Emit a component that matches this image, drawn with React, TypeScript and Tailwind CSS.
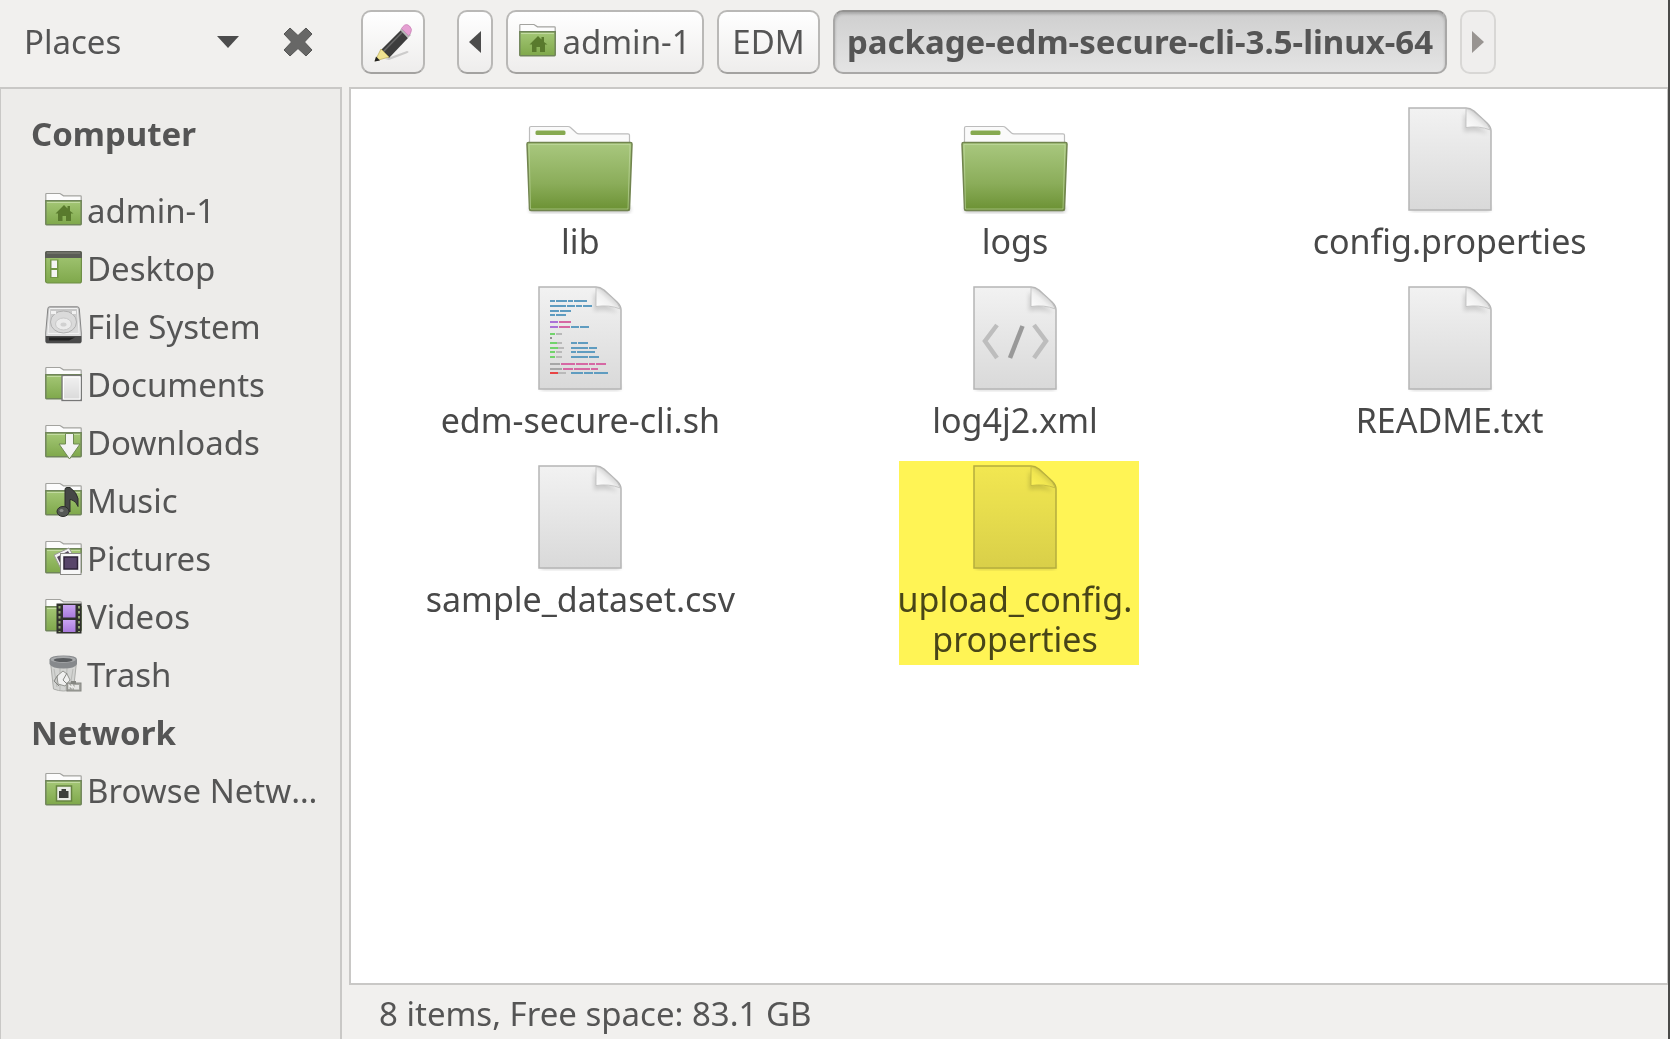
import type { ReactNode } from 'react';

const places = [
  { label: 'admin-1', icon: <HomeFolder /> },
  { label: 'Desktop', icon: <DesktopIcon /> },
  { label: 'File System', icon: <DriveIcon /> },
  { label: 'Documents', icon: <DocumentsFolder /> },
  { label: 'Downloads', icon: <DownloadsFolder /> },
  { label: 'Music', icon: <MusicFolder /> },
  { label: 'Pictures', icon: <PicturesFolder /> },
  { label: 'Videos', icon: <VideosFolder /> },
  { label: 'Trash', icon: <TrashIcon /> },
];

const files = [
  { lines: ['lib'], icon: <BigFolder /> },
  { lines: ['logs'], icon: <BigFolder /> },
  { lines: ['config.properties'], icon: <Page /> },
  { lines: ['edm-secure-cli.sh'], icon: <ScriptPage /> },
  { lines: ['log4j2.xml'], icon: <XmlPage /> },
  { lines: ['README.txt'], icon: <Page /> },
  { lines: ['sample_dataset.csv'], icon: <Page /> },
  { lines: ['upload_config.', 'properties'], icon: <Page />, marked: true },
];

// [x, y, width, color] of each run of code on the script icon
const codeRuns: [number, number, number, string][] = [
  [12, 14, 5, '#5f9cc0'], [18, 14, 11, '#5f9cc0'], [30, 14, 5, '#5f9cc0'], [36, 14, 13, '#5f9cc0'],
  [12, 19, 16, '#5f9cc0'], [29, 19, 8, '#5f9cc0'], [38, 19, 6, '#5f9cc0'], [45, 19, 9, '#5f9cc0'],
  [12, 24, 9, '#5f9cc0'], [22, 24, 11, '#5f9cc0'],
  [12, 28, 5, '#5f9cc0'], [18, 28, 10, '#5f9cc0'],
  [12, 35, 8, '#ab72d6'], [21, 35, 12, '#d668a4'],
  [12, 40, 8, '#ab72d6'], [21, 40, 11, '#d668a4'], [33, 40, 8, '#5f9cc0'], [42, 40, 9, '#5f9cc0'],
  [12, 47, 5, '#72d36c'], [18, 47, 6, '#b9b9b9'],
  [12, 51, 2, '#8f8f8f'],
  [12, 56, 7, '#72d36c'], [19, 56, 5, '#b9b9b9'], [33, 56, 6, '#5f9cc0'], [40, 56, 10, '#5f9cc0'],
  [12, 61, 8, '#72d36c'], [20, 61, 6, '#b9b9b9'], [33, 61, 17, '#5f9cc0'], [51, 61, 8, '#5f9cc0'],
  [12, 65, 5, '#72d36c'], [18, 65, 6, '#b9b9b9'], [33, 65, 5, '#5f9cc0'], [39, 65, 18, '#5f9cc0'],
  [12, 70, 5, '#72d36c'], [18, 70, 6, '#b9b9b9'], [33, 70, 17, '#5f9cc0'], [51, 70, 10, '#5f9cc0'],
  [12, 77, 10, '#a7a7a7'], [23, 77, 14, '#d668a4'], [38, 77, 12, '#d668a4'], [51, 77, 6, '#d668a4'], [58, 77, 10, '#d668a4'],
  [12, 82, 12, '#a7a7a7'], [25, 82, 10, '#d668a4'], [36, 82, 16, '#d668a4'], [53, 82, 7, '#d668a4'],
  [12, 86, 8, '#e84545'], [20, 86, 8, '#b9b9b9'], [33, 86, 12, '#5f9cc0'], [46, 86, 9, '#5f9cc0'], [56, 86, 14, '#5f9cc0'],
];

function Gradients() {
  return (
    <svg width="0" height="0" className="absolute" aria-hidden="true">
      <defs>
        <linearGradient id="green" x1="0" y1="0" x2="0" y2="1">
          <stop offset="0" stopColor="#a4c776" />
          <stop offset="1" stopColor="#7fa84b" />
        </linearGradient>
        <linearGradient id="bigGreen" x1="0" y1="0" x2="0" y2="1">
          <stop offset="0" stopColor="#a9c87f" />
          <stop offset="0.6" stopColor="#8bad5a" />
          <stop offset="1" stopColor="#6b9133" />
        </linearGradient>
        <linearGradient id="paper" x1="0" y1="0" x2="0" y2="1">
          <stop offset="0" stopColor="#f2f2f2" />
          <stop offset="1" stopColor="#d9d9d9" />
        </linearGradient>
        <linearGradient id="fold" x1="0" y1="1" x2="0.7" y2="0.3">
          <stop offset="0" stopColor="#ffffff" />
          <stop offset="0.6" stopColor="#f0f0f0" />
          <stop offset="1" stopColor="#c4c4c4" />
        </linearGradient>
        <linearGradient id="metal" x1="0" y1="0" x2="0" y2="1">
          <stop offset="0" stopColor="#c4c4c4" />
          <stop offset="1" stopColor="#e6e6e6" />
        </linearGradient>
        <linearGradient id="violet" x1="0" y1="0" x2="0" y2="1">
          <stop offset="0" stopColor="#c9a4f2" />
          <stop offset="1" stopColor="#a97bdc" />
        </linearGradient>
        <filter id="soft" x="-30%" y="-30%" width="160%" height="160%">
          <feGaussianBlur stdDeviation="2" />
        </filter>
      </defs>
    </svg>
  );
}

function SmallIcon({ children }: { children: ReactNode }) {
  return (
    <svg viewBox="0 0 37 38" className="mb-1 h-[38px] w-[37px] shrink-0" aria-hidden="true">
      {children}
    </svg>
  );
}

function SmallFolder({ children }: { children?: ReactNode }) {
  return (
    <SmallIcon>
      <path d="M.8 12V4.2q0-.7.7-.7H15l3.500 2.300H35.500q.7 0 .7.700V12z" fill="#fcfcfc" stroke="#a3a39f" strokeWidth="1.200" />
      <path d="M.8 10.800h35.400v23.200q0 .7-.7.7H1.500q-.7 0-.7-.7z" fill="url(#green)" stroke="#70855a" strokeWidth="1.500" />
      <path d="M2 12.500h33" stroke="#c3dba2" />
      {children}
    </SmallIcon>
  );
}

function HomeFolder() {
  return (
    <SmallFolder>
      <path d="M10.500 23.500 19 15l3.500 3.500V16H25v5l3.500 2.500H26V31h-5v-5h-3.500v5H13v-7.500z" fill="#597a2d" />
    </SmallFolder>
  );
}

function DesktopIcon() {
  return (
    <SmallIcon>
      <rect x=".6" y="3.500" width="35.800" height="31.500" rx="2" fill="url(#green)" stroke="#6e8e45" strokeWidth="1.200" />
      <path d="M0 10V5q0-2 2-2h33q2 0 2 2v5z" fill="#5a5c55" />
      <path d="M2 5h33" stroke="#77786f" strokeWidth="1.500" />
      <rect x="5" y="11.500" width="8.500" height="18.500" fill="#729546" />
      <rect x="6.500" y="12.500" width="5.500" height="7.500" fill="#f4f4f4" />
      <rect x="6.500" y="22" width="5.500" height="7" fill="#f4f4f4" />
    </SmallIcon>
  );
}

function DriveIcon() {
  return (
    <SmallIcon>
      <path d="M4.500.8h28q1.500 0 1.800 2L36.300 27v8.500q0 1.500-1.500 1.500H2.200Q.7 37 .7 35.500V27L2.800 2.800q.2-2 1.700-2z" fill="url(#metal)" stroke="#858585" />
      <path d="M4.800 2.500h27.500l1.800 25H3z" fill="none" stroke="#f2f2f2" />
      <ellipse cx="18.500" cy="16" rx="13" ry="11" fill="#dadada" stroke="#b0b0b0" />
      <ellipse cx="18.500" cy="18" rx="8" ry="6" fill="#ebebeb" stroke="#c8c8c8" />
      <ellipse cx="18.500" cy="18.500" rx="3" ry="2" fill="#d0d0d0" />
      <path d="M6 5h5v3H6zM27 5h4v3h-4z" fill="#f1f1f1" />
      <path d="M.7 30h35.600v5.500q0 1.500-1.500 1.500H2.200Q.7 37 .7 35.500z" fill="#4a4a4a" />
      <path d="M4 31.500h26l-6 3H4z" fill="#222" />
    </SmallIcon>
  );
}

function DocumentsFolder() {
  return (
    <SmallFolder>
      <rect x="17" y="11.500" width="19.300" height="25" fill="url(#paper)" stroke="#777" strokeWidth="1.300" />
      <path d="M18.500 13h16.500v22h-16.500z" fill="none" stroke="#fff" />
    </SmallFolder>
  );
}

function DownloadsFolder() {
  return (
    <SmallFolder>
      <path d="M20.500 11.500h8V22h6.500L24.500 37 14 22h6.500z" fill="#f3f3f3" stroke="#6f8a52" />
    </SmallFolder>
  );
}

function MusicFolder() {
  return (
    <SmallFolder>
      <path d="M20 28V9.500q0-2 2-2h3q7 5 8 11v8q-2-5-5-6-2-1-3-1V32z" fill="#454746" stroke="#2c2d2b" />
      <ellipse cx="18" cy="31.500" rx="6" ry="5" fill="#555855" stroke="#2c2d2b" />
      <ellipse cx="16.500" cy="30.500" rx="2" ry="1.500" fill="#8d8f8b" />
    </SmallFolder>
  );
}

function PicturesFolder() {
  return (
    <SmallFolder>
      <path d="m9 17 15-7 8 14-15 9z" fill="#f2f2f2" stroke="#9a9a94" />
      <path d="m12 19 11-6 4 7-10 9z" fill="#55475c" />
      <rect x="15.500" y="15.500" width="20.500" height="21" fill="#f7f7f7" stroke="#8b8b87" />
      <rect x="19" y="19" width="13.500" height="12" fill="#58456a" stroke="#2e2338" strokeWidth="1.500" />
    </SmallFolder>
  );
}

function VideosFolder() {
  return (
    <SmallFolder>
      <rect x="11.500" y="7.500" width="25" height="30" fill="#30312d" />
      <path d="M14.500 10v26M34 10v26" stroke="#92a873" strokeWidth="2" strokeDasharray="2.500 2.500" />
      <rect x="18" y="9" width="12.500" height="12.500" fill="url(#violet)" />
      <rect x="18" y="24" width="12.500" height="12" fill="url(#violet)" />
    </SmallFolder>
  );
}

function TrashIcon() {
  return (
    <SmallIcon>
      <path d="M5.500 8h26l-3 27q-10 4-20 0z" fill="#d3d4d2" stroke="#abaca9" />
      <path d="m9 15 3 18M15 14v22M22 14l-1 22M28 15l-3 18" stroke="#b8b9b6" />
      <path d="m12 22 6-5 4 3 3 6-5 6-7-2z" fill="#f0f0ef" stroke="#93948f" />
      <path d="M13 21 9 27l5 5M22 19l-4 7 5 5" fill="none" stroke="#858682" />
      <path d="M4.500 5.500Q5 1.500 18.500 1.500T32 5.500V10q-2 4.500-13.500 4.500T4.500 10z" fill="#86898c" />
      <ellipse cx="18.200" cy="5.500" rx="12.500" ry="3.300" fill="#a9abad" />
      <ellipse cx="18.200" cy="6" rx="9.500" ry="2" fill="#5a5d60" />
      <rect x="22" y="29" width="14" height="8" fill="#a3a49f" stroke="#858681" />
      <path d="M24 35v-4l3 3v-3l3 4" fill="none" stroke="#ebebe9" strokeWidth="1.300" />
      <rect x="29.500" y="31" width="4.500" height="4.500" fill="#e6e6e4" />
      <path d="M26 27h5v3h-5z" fill="#858681" />
    </SmallIcon>
  );
}

function NetworkFolder() {
  return (
    <SmallFolder>
      <rect x="11.500" y="16" width="15" height="15" fill="#e9ece5" stroke="#668440" strokeWidth="1.500" />
      <path d="M14 28v-7h2.500v-2h4.500v2h2.500v7z" fill="#3d403b" />
    </SmallFolder>
  );
}

function BigFolder() {
  return (
    <svg viewBox="0 0 108 104" className="h-[104px] w-[108px] overflow-visible" aria-hidden="true">
      <path d="M4 100h100v5H4z" fill="#000" opacity=".3" filter="url(#soft)" />
      <path d="M3.500 40V21q0-1.500 1.500-1.500h37q1.500 0 2.500 1l6 5.500q1 .8 2.500.8H102q1.500 0 1.500 1.500V40z" fill="#fafafa" stroke="#bcbcbc" strokeWidth="1.200" />
      <rect x="9.500" y="23.500" width="30" height="4.500" rx="1.500" fill="#86a950" />
      <path d="M1 37q0-1.500 1.500-1.500h102q1.500 0 1.500 1.500l-2.500 65q0 1.500-1.500 1.500H5q-1.500 0-1.500-1.500z" fill="url(#bigGreen)" stroke="#71844f" strokeWidth="1.500" />
      <path d="M4.500 102 3 37.500h101l-2 64.500z" fill="none" stroke="#c9dfab" opacity=".55" />
    </svg>
  );
}

function Page({ children }: { children?: ReactNode }) {
  return (
    <svg viewBox="0 0 84 104" className="h-[104px] w-[84px] overflow-visible" aria-hidden="true">
      <path d="M3 99h79v5H3z" fill="#000" opacity=".2" filter="url(#soft)" />
      <path d="M1 1h57q4 0 8 3l13 12q4 4 4 8v79H1z" fill="url(#paper)" stroke="#b5b5b5" strokeWidth="1.500" />
      <path d="M56 6v19q12-3 24 2" fill="#000" opacity=".14" filter="url(#soft)" />
      <path d="M58 1.500V20.500q13-2 24.500 2.500Q80 17 75 12.500L66 5q-4-3.500-8-3.500z" fill="url(#fold)" stroke="#bdbdbd" strokeWidth=".8" />
      {children}
    </svg>
  );
}

function ScriptPage() {
  return (
    <Page>
      {codeRuns.map(([x, y, width, color]) => (
        <rect key={`${x}-${y}`} x={x} y={y} width={width} height="2" fill={color} />
      ))}
    </Page>
  );
}

function XmlPage() {
  return (
    <Page>
      <path d="M24 39 12 55l12 17M61 39l12 16-12 17" fill="none" stroke="#bdbdbd" strokeWidth="4.500" />
      <path d="M49.500 40 37 72" stroke="#999" strokeWidth="4.500" />
    </Page>
  );
}

function PencilIcon() {
  return (
    <svg viewBox="0 0 40 40" className="h-10 w-10" aria-hidden="true">
      <path d="m12 37 22-8q4 1-2 3l-16 6z" fill="#000" opacity=".16" />
      <path d="m28 8 7 8-19 20-8-8z" fill="#3d3d3d" />
      <path d="M29.500 10 10 30" stroke="#686868" strokeWidth="1.500" />
      <path d="m27 8 3-3 8 8-3 3z" fill="#b4b4b4" />
      <path d="M30 4.500q3-3.500 6.500-.5t1 7.500l-2 2-7-7z" fill="#e59fd2" stroke="#c77fb3" strokeWidth=".7" />
      <path d="m8 27 8 8-14 4z" fill="#f0e391" stroke="#b9ab58" strokeWidth=".7" />
      <path d="m3 34.500 4 4L1.500 39.500z" fill="#222" />
    </svg>
  );
}

const pathButton =
  'flex h-16 shrink-0 items-center justify-center rounded-[10px] border-2 border-[#b9b8b6] border-b-[#a3a2a0] bg-linear-to-b from-white to-[#eeedec]';

function Toolbar() {
  return (
    <header className="flex h-[87px] shrink-0 items-center pb-1">
      <div className="flex w-[361px] shrink-0 items-center pl-6">
        <label className="relative flex w-[215px] items-center">
          <select aria-label="Side pane" className="w-full appearance-none bg-transparent outline-none">
            <option>Places</option>
          </select>
          <svg viewBox="0 0 22 12" className="pointer-events-none absolute right-0 h-3 w-[22px]" aria-hidden="true">
            <path d="M0 0h22L11 12z" fill="#4c4c4c" />
          </svg>
        </label>
        <button type="button" aria-label="Close side pane" className="ml-11">
          <svg viewBox="0 0 30 30" className="h-[30px] w-[30px]" aria-hidden="true">
            <path d="m7 1 8 7.500L23 1l6 6-7.500 8 7.500 8-6 6-8-7.500L7 29l-6-6 7.500-8L1 7z" fill="#676766" stroke="#555554" strokeLinejoin="round" />
          </svg>
        </button>
      </div>
      <button type="button" aria-label="Edit location" className={`${pathButton} w-16`}>
        <PencilIcon />
      </button>
      <nav aria-label="Location" className="ml-8 flex gap-[13px]">
        <button type="button" aria-label="Back" className={`${pathButton} w-9`}>
          <svg viewBox="0 0 12 22" className="h-[22px] w-3" aria-hidden="true">
            <path d="M12 0v22L0 11z" fill="#4c4c4c" />
          </svg>
        </button>
        <button type="button" className={`${pathButton} w-[198px] gap-1.5`}>
          <HomeFolder />
          admin-1
        </button>
        <button type="button" className={`${pathButton} w-[103px]`}>
          EDM
        </button>
        <button
          type="button"
          className="flex h-16 w-[614px] items-center justify-center rounded-[10px] border-2 border-[#a9a8a7] border-t-[#949392] bg-linear-to-b from-[#cfcfcf] to-[#e4e4e4] font-bold whitespace-nowrap shadow-[inset_0_2px_3px_rgba(0,0,0,0.2)]"
        >
          package-edm-secure-cli-3.5-linux-64
        </button>
        <button
          type="button"
          aria-label="Forward"
          disabled
          className="flex h-16 w-9 items-center justify-center rounded-[10px] border-2 border-[#d8d7d5] bg-[#efeeed]"
        >
          <svg viewBox="0 0 12 22" className="h-[22px] w-3" aria-hidden="true">
            <path d="M0 0v22l12-11z" fill="#989491" />
          </svg>
        </button>
      </nav>
    </header>
  );
}

function PlaceLink({ label, icon }: { label: string; icon: ReactNode }) {
  return (
    <li>
      <a href="#" className="flex h-[58px] items-center gap-[5px] pr-3 pl-11">
        {icon}
        <span className="truncate">{label}</span>
      </a>
    </li>
  );
}

function Sidebar() {
  return (
    <aside className="w-[342px] shrink-0 border-2 border-b-0 border-l border-[#c9c8c6] bg-[#edecea]">
      <h2 className="flex h-[93px] items-center pb-1 pl-[30px] font-bold">Computer</h2>
      <ul>
        {places.map((place) => (
          <PlaceLink key={place.label} label={place.label} icon={place.icon} />
        ))}
      </ul>
      <h2 className="flex h-[58px] items-center pl-[30px] font-bold">Network</h2>
      <ul>
        <PlaceLink label="Browse Network" icon={<NetworkFolder />} />
      </ul>
    </aside>
  );
}

function FileItem({ lines, icon, marked }: { lines: string[]; icon: ReactNode; marked?: boolean }) {
  return (
    <li className="relative flex w-[228px] flex-col items-center gap-2.5">
      {icon}
      <div className="text-center leading-10 whitespace-nowrap">
        {lines.map((line) => (
          <div key={line}>{line}</div>
        ))}
      </div>
      {marked && <div className="absolute -top-1 -right-2.5 -bottom-1.5 -left-0.5 bg-[#fff455] mix-blend-multiply" />}
    </li>
  );
}

export default function App() {
  return (
    <div className="flex min-h-screen flex-col border-r-2 border-[#4a4a48] bg-[#f1f0ee] font-['Noto_Sans','Open_Sans',sans-serif] text-[33px] leading-[46px] text-[#555]">
      <Gradients />
      <Toolbar />
      <div className="flex flex-1">
        <Sidebar />
        <div className="ml-[7px] flex min-w-0 flex-1 flex-col">
          <main className="flex-1 border-2 border-r border-[#c9c8c6] bg-white">
            <ul className="grid grid-cols-3 justify-items-center gap-y-[25px] pt-[18px] pl-3 text-[34px] text-[#484848]">
              {files.map((file) => (
                <FileItem key={file.lines[0]} {...file} />
              ))}
            </ul>
          </main>
          <footer className="flex h-[54px] shrink-0 items-center pt-1 pl-[30px]">8 items, Free space: 83.1 GB</footer>
        </div>
      </div>
    </div>
  );
}
